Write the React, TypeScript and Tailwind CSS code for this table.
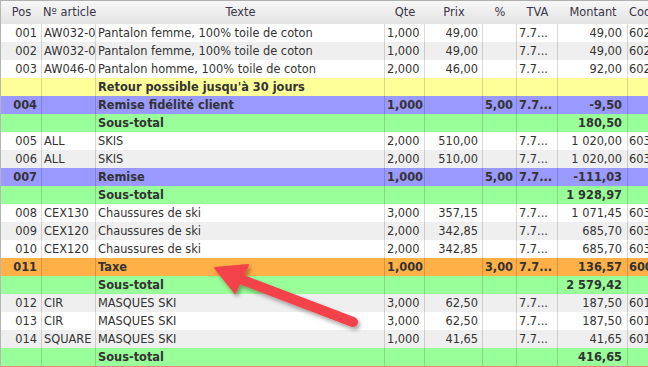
type Kind = "n" | "note" | "disc" | "sub" | "tax";

type Row = {
  kind: Kind;
  pos?: string;
  art?: string;
  text: string;
  qte?: string;
  prix?: string;
  pct?: string;
  tva?: string;
  montant?: string;
  code?: string;
};

const rows: Row[] = [
  { kind: "n", pos: "001", art: "AW032-0100", text: "Pantalon femme, 100% toile de coton", qte: "1,000", prix: "49,00", tva: "7.7...", montant: "49,00", code: "6020" },
  { kind: "n", pos: "002", art: "AW032-0200", text: "Pantalon femme, 100% toile de coton", qte: "1,000", prix: "49,00", tva: "7.7...", montant: "49,00", code: "6020" },
  { kind: "n", pos: "003", art: "AW046-0100", text: "Pantalon homme, 100% toile de coton", qte: "2,000", prix: "46,00", tva: "7.7...", montant: "92,00", code: "6020" },
  { kind: "note", text: "Retour possible jusqu'à 30 jours" },
  { kind: "disc", pos: "004", text: "Remise fidélité client", qte: "1,000", pct: "5,00", tva: "7.7...", montant: "-9,50" },
  { kind: "sub", text: "Sous-total", montant: "180,50" },
  { kind: "n", pos: "005", art: "ALL", text: "SKIS", qte: "2,000", prix: "510,00", tva: "7.7...", montant: "1 020,00", code: "6030" },
  { kind: "n", pos: "006", art: "ALL", text: "SKIS", qte: "2,000", prix: "510,00", tva: "7.7...", montant: "1 020,00", code: "6030" },
  { kind: "disc", pos: "007", text: "Remise", qte: "1,000", pct: "5,00", tva: "7.7...", montant: "-111,03" },
  { kind: "sub", text: "Sous-total", montant: "1 928,97" },
  { kind: "n", pos: "008", art: "CEX130", text: "Chaussures de ski", qte: "3,000", prix: "357,15", tva: "7.7...", montant: "1 071,45", code: "6030" },
  { kind: "n", pos: "009", art: "CEX120", text: "Chaussures de ski", qte: "2,000", prix: "342,85", tva: "7.7...", montant: "685,70", code: "6030" },
  { kind: "n", pos: "010", art: "CEX120", text: "Chaussures de ski", qte: "2,000", prix: "342,85", tva: "7.7...", montant: "685,70", code: "6030" },
  { kind: "tax", pos: "011", text: "Taxe", qte: "1,000", pct: "3,00", tva: "7.7...", montant: "136,57", code: "6000" },
  { kind: "sub", text: "Sous-total", montant: "2 579,42" },
  { kind: "n", pos: "012", art: "CIR", text: "MASQUES SKI", qte: "3,000", prix: "62,50", tva: "7.7...", montant: "187,50", code: "6010" },
  { kind: "n", pos: "013", art: "CIR", text: "MASQUES SKI", qte: "3,000", prix: "62,50", tva: "7.7...", montant: "187,50", code: "6010" },
  { kind: "n", pos: "014", art: "SQUARE", text: "MASQUES SKI", qte: "1,000", prix: "41,65", tva: "7.7...", montant: "41,65", code: "6010" },
  { kind: "sub", text: "Sous-total", montant: "416,65" },
];

const kindBg: Record<Kind, string> = {
  n: "",
  note: "bg-[#ffff99]",
  disc: "bg-[#9999ff]",
  sub: "bg-[#99ff99]",
  tax: "bg-[#ffb047]",
};

const cell = "shrink-0 overflow-hidden whitespace-nowrap border-r border-black/15 h-[18px] leading-[18px]";

const App = () => {
  return (
    <div
      className="relative w-[648px] h-[367px] overflow-hidden bg-white text-[11.4px] text-[#333]"
      style={{ fontFamily: '"DejaVu Sans", Verdana, sans-serif' }}
    >
      <div className="border-l border-[#b5b5b5] w-[720px]">
        {/* header */}
        <div className="flex h-[24px] leading-[23px] border-t border-[#b0b0b0] bg-gradient-to-b from-[#f7f7f7] to-[#e3e3e3] text-[#3a3448]">
          <div className="w-[41px] shrink-0 text-center">Pos</div>
          <div className="w-[54px] shrink-0 whitespace-nowrap overflow-hidden pl-[1px]">Nº article</div>
          <div className="w-[289px] shrink-0 text-center">Texte</div>
          <div className="w-[40px] shrink-0 text-center">Qte</div>
          <div className="w-[58px] shrink-0 text-center">Prix</div>
          <div className="w-[34px] shrink-0 text-center">%</div>
          <div className="w-[41px] shrink-0 text-center">TVA</div>
          <div className="w-[70px] shrink-0 text-center">Montant</div>
          <div className="w-[80px] shrink-0 pl-[1px]">Code</div>
        </div>

        {rows.map((r, i) => {
          const bg = r.kind === "n" ? (i % 2 === 0 ? "bg-white" : "bg-[#efefef]") : kindBg[r.kind];
          const bold = r.kind !== "n" ? "font-bold" : "";
          return (
            <div key={i} className={`flex ${bg} ${bold}`}>
              <div className={`${cell} w-[41px] text-right pr-[4px]`}>{r.pos}</div>
              <div className={`${cell} w-[54px] pl-[2px]`}>{r.art}</div>
              <div className={`${cell} w-[289px] pl-[2px]`}>{r.text}</div>
              <div className={`${cell} w-[40px] pl-[2px]`}>{r.qte}</div>
              <div className={`${cell} w-[58px] text-right pr-[4px]`}>{r.prix}</div>
              <div className={`${cell} w-[34px] text-right pr-[3px]`}>{r.pct}</div>
              <div className={`${cell} w-[41px] pl-[2px]`}>{r.tva}</div>
              <div className={`${cell} w-[70px] text-right pr-[5px]`}>{r.montant}</div>
              <div className={`${cell} w-[80px] pl-[1px]`}>{r.code}</div>
            </div>
          );
        })}
        <div className="h-[4px] border-t border-[#f08080] bg-[#ffb0b0]"></div>
      </div>

      {/* annotation arrow */}
      <svg className="absolute left-0 top-0 pointer-events-none" width="648" height="367">
        <defs>
          <filter id="sh" x="-20%" y="-20%" width="140%" height="140%">
            <feDropShadow dx="2" dy="3" stdDeviation="2" floodColor="#000" floodOpacity="0.35" />
          </filter>
        </defs>
        <g filter="url(#sh)" fill="#f4434b" stroke="#f4434b">
          <line x1="240" y1="279" x2="353" y2="322" strokeWidth="10" strokeLinecap="round" />
          <polygon points="215,268 248,265 235,293" strokeWidth="2" strokeLinejoin="round" />
        </g>
      </svg>
    </div>
  );
};

export default App;
